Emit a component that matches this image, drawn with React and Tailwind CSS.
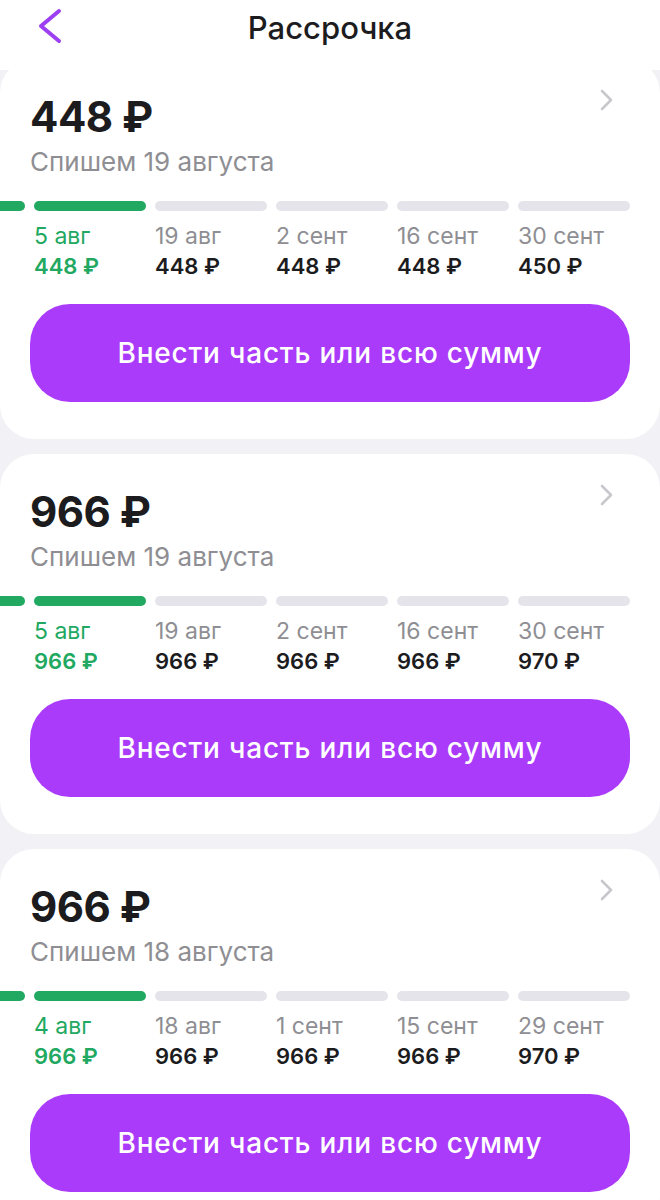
import React from "react";

const plans = [
  {
    amount: "448 ₽",
    due: "Спишем 19 августа",
    steps: [
      ["5 авг", "448 ₽"],
      ["19 авг", "448 ₽"],
      ["2 сент", "448 ₽"],
      ["16 сент", "448 ₽"],
      ["30 сент", "450 ₽"],
    ],
  },
  {
    amount: "966 ₽",
    due: "Спишем 19 августа",
    steps: [
      ["5 авг", "966 ₽"],
      ["19 авг", "966 ₽"],
      ["2 сент", "966 ₽"],
      ["16 сент", "966 ₽"],
      ["30 сент", "970 ₽"],
    ],
  },
  {
    amount: "966 ₽",
    due: "Спишем 18 августа",
    steps: [
      ["4 авг", "966 ₽"],
      ["18 авг", "966 ₽"],
      ["1 сент", "966 ₽"],
      ["15 сент", "966 ₽"],
      ["29 сент", "970 ₽"],
    ],
  },
];

const PlanCard = ({ plan }) => {
  return (
    <div className="bg-white rounded-[34px] overflow-hidden pt-[32px] pb-[37px]">
      <div className="flex items-start justify-between px-[30px]">
        <p className="text-[42px] leading-[52px] font-bold text-[#1c1c1e] tracking-[-0.5px]">{plan.amount}</p>
        <svg width="24" height="24" viewBox="0 0 24 24" className="mt-[-3px] mr-[12px]">
          <path d="M8 3 L17 12 L8 21" fill="none" stroke="#c7c7cc" strokeWidth="2.6" strokeLinecap="round" strokeLinejoin="round" />
        </svg>
      </div>
      <p className="px-[30px] mt-[4px] text-[26px] leading-[30px] text-[#8e8e93]">{plan.due}</p>

      {/* график платежей, первый платёж уже прокручен за край */}
      <div className="flex gap-[9px] ml-[-87px] mt-[24px]">
        <div className="w-[112px] shrink-0">
          <div className="h-[10px] rounded-full bg-[#21a861]" />
        </div>
        {plan.steps.map(([date, sum], i) => (
          <div key={i} className="w-[112px] shrink-0">
            <div className={i === 0 ? "h-[10px] rounded-full bg-[#21a861]" : "h-[10px] rounded-full bg-[#e4e4ea]"} />
            <p className={i === 0 ? "mt-[11px] text-[23px] leading-[28px] text-[#21a861]" : "mt-[11px] text-[23px] leading-[28px] text-[#8e8e93]"}>{date}</p>
            <p className={i === 0 ? "mt-[2px] text-[22px] leading-[28px] font-semibold text-[#21a861]" : "mt-[2px] text-[22px] leading-[28px] font-semibold text-[#1c1c1e]"}>{sum}</p>
          </div>
        ))}
      </div>

      <div className="px-[30px] mt-[24px]">
        <button className="w-full h-[98px] rounded-[40px] bg-[#aa3bfa] text-white text-[28px] tracking-[0.8px] font-medium">
          Внести часть или всю сумму
        </button>
      </div>
    </div>
  );
};

export default function App() {
  return (
    <div className="w-[660px] h-[1200px] overflow-hidden bg-[#f2f2f6] font-['Inter',sans-serif]">
      <div className="relative z-10 bg-white h-[70px] flex justify-center pt-[6px]">
        <svg width="30" height="40" viewBox="0 0 30 40" className="absolute left-[35px] top-[6px]">
          <path d="M24 5 L6 20 L24 35" fill="none" stroke="#9d3ff2" strokeWidth="4" strokeLinecap="round" strokeLinejoin="round" />
        </svg>
        <p className="text-[31px] leading-[44px] font-medium text-[#1c1c1e]">Рассрочка</p>
      </div>
      <div className="flex flex-col gap-[15px] mt-[-11px]">
        {plans.map((p, i) => (
          <PlanCard key={i} plan={p} />
        ))}
      </div>
    </div>
  );
}
